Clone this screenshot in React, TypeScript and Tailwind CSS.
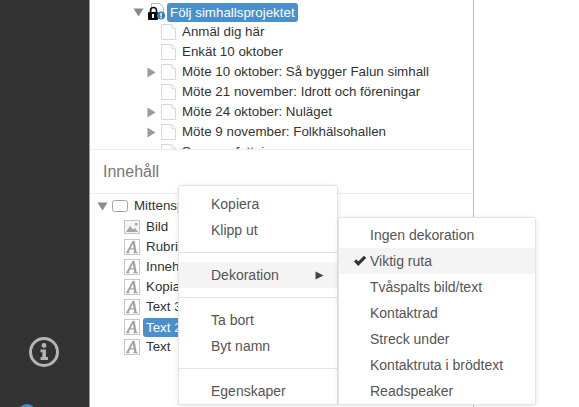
import React from "react";

const Down = () => (
  <svg width="11" height="9" viewBox="0 0 11 9" className="shrink-0"><path d="M0.5 0.5H10.5L5.5 8.5Z" fill="#8a8a8a" /></svg>
);
const Right = () => (
  <svg width="9" height="11" viewBox="0 0 9 11" className="shrink-0"><path d="M0.5 0.5V10.5L8.5 5.5Z" fill="#9a9a9a" /></svg>
);
const Page = () => (
  <svg width="15" height="16" viewBox="0 0 15 16" className="shrink-0">
    <path d="M0.5 0.5H10.5L14.5 4.5V15.5H0.5Z" fill="#fff" stroke="#d8d8d8" />
    <path d="M10.5 0.5V4.5H14.5" fill="none" stroke="#e2e2e2" />
  </svg>
);
const LockPage = () => (
  <svg width="17" height="18" viewBox="0 0 17 18" className="shrink-0">
    <path d="M3.5 0.5H11.5L15.5 4.5V10H3.5Z" fill="#fff" stroke="#bbb" />
    <path d="M3 9V6.5a3 3 0 0 1 6 0V9" fill="none" stroke="#111" strokeWidth="1.6" transform="translate(-0.5 1)" />
    <rect x="0" y="9" width="10" height="8" rx="1" fill="#0a0a0a" />
    <rect x="4" y="11" width="2" height="4" fill="#fff" />
    <circle cx="13" cy="12.5" r="4" fill="#2f7fb8" />
    <rect x="12.3" y="10" width="1.5" height="3.4" fill="#fff" />
    <rect x="12.3" y="14" width="1.5" height="1.4" fill="#fff" />
  </svg>
);
const Box = () => (
  <svg width="16" height="12" viewBox="0 0 16 12" className="shrink-0"><rect x="0.5" y="0.5" width="15" height="11" rx="2" fill="#fff" stroke="#a8a8a8" /></svg>
);
const Pic = () => (
  <svg width="16" height="14" viewBox="0 0 16 14" className="shrink-0">
    <rect x="0.5" y="0.5" width="15" height="13" fill="#f4f4f4" stroke="#c4c4c4" />
    <path d="M2 12L6 6L9 9.5L11 8L14 12Z" fill="#a5a5a5" />
    <rect x="11" y="3" width="2.5" height="2.5" fill="#a5a5a5" />
  </svg>
);
const AIcon = () => (
  <svg width="16" height="16" viewBox="0 0 16 16" className="shrink-0">
    <rect x="0.5" y="0.5" width="15" height="15" fill="#fff" stroke="#c8c8c8" />
    <path d="M1.8 14.2L8.6 1.8H10.6L12.6 13.2L14 13.6V14.2H9V13.6L10.3 13.2L9.8 10.4H6.1L4.6 13.2L5.8 13.6V14.2ZM6.8 9.2H9.6L8.9 4.6Z" fill="#a2a2a2" />
  </svg>
);
const Info = () => (
  <svg width="32" height="32" viewBox="0 0 32 32">
    <circle cx="16" cy="16" r="13.5" fill="none" stroke="#b4b4b4" strokeWidth="3" />
    <circle cx="16" cy="9.5" r="2.4" fill="#b4b4b4" />
    <path d="M12.5 13.5H18V21H20V24H12.5V21H14.3V16.3H12.5Z" fill="#b4b4b4" />
  </svg>
);
const Check = () => (
  <svg width="14" height="12" viewBox="0 0 14 12" className="shrink-0"><path d="M1 6.5L3.2 4.3L5.2 6.4L11 0.8L13.2 3L5.2 11Z" fill="#333" /></svg>
);

function Row({ arrow, icon, children }: { arrow?: boolean; icon: React.ReactNode; children: React.ReactNode }) {
  return (
    <div className="flex h-5 items-center">
      <div className="flex w-[14px] justify-start">{arrow ? <Right /> : null}</div>
      <div className="flex w-[21px] justify-start">{icon}</div>
      <span className="whitespace-nowrap">{children}</span>
    </div>
  );
}

function Leaf({ icon, sel, children }: { icon: React.ReactNode; sel?: boolean; children: React.ReactNode }) {
  return (
    <div className="flex h-5 items-center">
      <div className="flex w-[22px] justify-start">{icon}</div>
      <span className={sel ? "-ml-[3px] whitespace-nowrap rounded-[3px] bg-[#4a90cc] px-[3px] leading-[19px] text-white" : "whitespace-nowrap"}>{children}</span>
    </div>
  );
}

const item = "flex h-[26px] items-center whitespace-nowrap";

export default function App() {
  return (
    <div className="relative flex h-[407px] w-[579px] overflow-hidden bg-white text-[13.35px] text-[#333]" style={{ fontFamily: '"Liberation Sans", Arial, sans-serif' }}>
      <aside className="relative flex w-[90px] shrink-0 flex-col items-center border-r border-r-[#9a9a9a] bg-[#333333]">
        <div className="mr-[1px] mt-[336px]"><Info /></div>
      </aside>
      <main className="flex h-full w-[384px] shrink-0 flex-col border-r border-r-[#bdbdbd]">
        <div className="h-[149px] shrink-0 overflow-hidden pl-[43px] pt-[2px]">
          <div className="flex h-5 items-center">
            <div className="w-[15px]"><Down /></div>
            <div className="flex w-[19px]"><LockPage /></div>
            <span className="whitespace-nowrap rounded-[3px] bg-[#4a90cc] px-[3px] leading-[19px] text-white">Följ simhallsprojektet</span>
          </div>
          <div className="pl-[14px]">
            <Row icon={<Page />}>Anmäl dig här</Row>
            <Row icon={<Page />}>Enkät 10 oktober</Row>
            <Row arrow icon={<Page />}>Möte 10 oktober: Så bygger Falun simhall</Row>
            <Row icon={<Page />}>Möte 21 november: Idrott och föreningar</Row>
            <Row arrow icon={<Page />}>Möte 24 oktober: Nuläget</Row>
            <Row arrow icon={<Page />}>Möte 9 november: Folkhälsohallen</Row>
            <Row icon={<Page />}>Sammanfattning</Row>
          </div>
        </div>
        <div className="flex h-[45px] shrink-0 items-center border-y border-y-[#ececec] pl-[13px] text-[16px] text-[#777]">Innehåll</div>
        <div className="pl-[6px] pt-[2px]">
          <div className="flex h-5 items-center">
            <div className="ml-[1px] w-[15px]"><Down /></div>
            <div className="flex w-[22px]"><Box /></div>
            <span className="whitespace-nowrap">Mittenspalt</span>
          </div>
          <div className="pl-[28px] pt-[1px]">
            <Leaf icon={<Pic />}>Bild</Leaf>
            <Leaf icon={<AIcon />}>Rubrik</Leaf>
            <Leaf icon={<AIcon />}>Innehåll</Leaf>
            <Leaf icon={<AIcon />}>Kopia</Leaf>
            <Leaf icon={<AIcon />}>Text 3</Leaf>
            <Leaf icon={<AIcon />} sel>Text 2</Leaf>
            <Leaf icon={<AIcon />}>Text</Leaf>
          </div>
        </div>
      </main>

      <div className="absolute bottom-[-15px] left-[18px] h-[18px] w-[18px] rounded-full bg-[#3f93c9]" />

      <div className="absolute left-[178px] top-[185px] w-[160px] rounded-t-[3px] border border-[#e4e4e4] bg-white pt-[5px] text-[14px] text-[#555] shadow-[0_1px_5px_rgba(0,0,0,0.1)]">
        <div className={`${item} pl-[32px]`}>Kopiera</div>
        <div className={`${item} pl-[32px]`}>Klipp ut</div>
        <div className="my-[9px] h-px bg-[#e3e3e3]" />
        <div className={`${item} justify-between bg-[#f4f4f4] pl-[32px] pr-[13px]`}>
          <span>Dekoration</span>
          <svg width="9" height="9" viewBox="0 0 9 9"><path d="M0.5 0.5V8.5L8.5 4.5Z" fill="#444" /></svg>
        </div>
        <div className="my-[9px] h-px bg-[#e3e3e3]" />
        <div className={`${item} pl-[32px]`}>Ta bort</div>
        <div className={`${item} pl-[32px]`}>Byt namn</div>
        <div className="my-[9px] h-px bg-[#e3e3e3]" />
        <div className={`${item} pl-[32px]`}>Egenskaper</div>
      </div>

      <div className="absolute left-[338px] top-[217px] w-[198px] rounded-t-[3px] border border-[#e4e4e4] bg-white pt-[4px] text-[14px] text-[#555] shadow-[0_1px_5px_rgba(0,0,0,0.1)]">
        <div className={`${item} pl-[31px]`}>Ingen dekoration</div>
        <div className={`${item} bg-[#f4f4f4] pl-[14px]`}>
          <div className="w-[17px]"><Check /></div>
          <span>Viktig ruta</span>
        </div>
        <div className={`${item} pl-[31px]`}>Tvåspalts bild/text</div>
        <div className={`${item} pl-[31px]`}>Kontaktrad</div>
        <div className={`${item} pl-[31px]`}>Streck under</div>
        <div className={`${item} pl-[31px]`}>Kontaktruta i brödtext</div>
        <div className={`${item} pl-[31px]`}>Readspeaker</div>
      </div>
    </div>
  );
}
